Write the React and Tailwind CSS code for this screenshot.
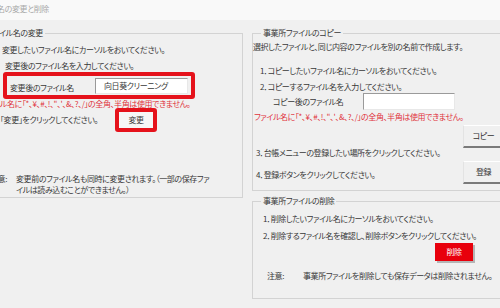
import React from "react";

const jp = "[font-family:'Noto_Sans_CJK_JP','Noto_Sans',sans-serif] [font-feature-settings:'palt'] tracking-[-0.4px]";
const ng = "ファイル名に「*、¥、#、!、\"、'、&、?、/」の全角、半角は使用できません。";

function WinButton({ label }) {
  return (
    <div className="w-[40px] h-[23px] shrink-0 bg-[#f0f0f0] border-t border-t-white border-l border-l-[#e3e3e3] border-b-2 border-b-[#7a7a7a] flex items-center justify-center text-[#333]">
      {label}
    </div>
  );
}

export default function App() {
  return (
    <div className={`w-[500px] h-[308px] overflow-hidden bg-[#f0f0f0] text-[#383838] text-[8px] ${jp}`}>
      {/* title bar */}
      <div className="h-[20px] bg-[#f9f9f9] text-[#a8a8a8] leading-[17px] ml-[-3px]">名の変更と削除</div>

      <div className="flex items-start mt-[7px]">
        {/* left: rename */}
        <fieldset className="w-[250px] ml-[-7px] shrink-0 border border-[#d3d3d3] pb-[2px]">
          <legend className="ml-[3px] px-[2px] leading-[12px]">イル名の変更</legend>
          <div className="ml-[8px] mt-[3px] leading-[16px]">変更したいファイル名にカーソルをおいてください。</div>
          <div className="ml-[11px] leading-[16px]">変更後のファイル名を入力してください。</div>
          <div className="ml-[9px] mt-[-2px] w-[192px] h-[27px] border-4 border-[#e5121b] rounded-[3px] flex items-center">
            <span className="ml-[3px] mt-[4px] w-[85px] shrink-0">変更後のファイル名</span>
            <div className="w-[93px] h-[16px] bg-white border-t border-l border-[#9a9a9a] border-b border-r border-b-[#e8e8e8] border-r-[#e8e8e8] pl-[8px] leading-[14px]">
              向日葵クリーニング
            </div>
          </div>
          <div className="ml-[6px] h-[9px] leading-[10px] text-[#e0323c] whitespace-nowrap">ル名に「*、¥、#、!、"、'、&、?、/」の全角、半角は使用できません。</div>
          <div className="flex items-center h-[24px] ml-[6px]">
            <span className="w-[115px] shrink-0">「変更」をクリックしてください。</span>
            <div className="w-[42px] h-[24px] border-4 border-[#e5121b] rounded-[3px] bg-[#f6f6f6] flex items-center justify-center">変更</div>
          </div>
          <div className="flex mt-[41px] leading-[11px]">
            <span className="ml-[-4px] w-[26px] shrink-0">注意:</span>
            <span className="whitespace-nowrap">
              変更前のファイル名も同時に変更されます。（一部の保存ファ
              <br />
              イルは読み込むことができません。）
            </span>
          </div>
        </fieldset>

        {/* right: copy + delete */}
        <div className="ml-[9px] flex flex-col">
          <fieldset className="w-[270px] border border-[#d3d3d3] pb-[6px]">
            <legend className="ml-[8px] px-[2px] leading-[12px]">事業所ファイルのコピー</legend>
            <div className="mt-[1px] leading-[14px] whitespace-nowrap">選択したファイルと、同じ内容のファイルを別の名前で作成します。</div>
            <div className="ml-[7px] mt-[9px] leading-[16px]">1．コピーしたいファイル名にカーソルをおいてください。</div>
            <div className="ml-[7px] leading-[16px]">2．コピーするファイル名を入力してください。</div>
            <div className="flex items-center h-[17px] mt-[-2px] ml-[20px]">
              <span className="w-[90px] shrink-0">コピー後のファイル名</span>
              <div className="w-[92px] h-[17px] bg-white border-t border-l border-[#9a9a9a] border-b border-r border-b-[#e8e8e8] border-r-[#e8e8e8]" />
            </div>
            <div className="mt-[1px] ml-[1px] leading-[12px] text-[#e0323c] whitespace-nowrap">{ng}</div>
            <div className="mt-[2px] ml-[210px]">
              <WinButton label="コピー" />
            </div>
            <div className="mt-[-3px] ml-[3px] leading-[16px]">3．台帳メニューの登録したい場所をクリックしてください。</div>
            <div className="flex items-start h-[23px] ml-[3px]">
              <span className="w-[207px] shrink-0 mt-[6px] leading-[16px]">4．登録ボタンをクリックしてください。</span>
              <WinButton label="登録" />
            </div>
          </fieldset>

          <fieldset className="w-[270px] mt-[4px] border border-[#d3d3d3] pb-[14px]">
            <legend className="ml-[8px] px-[2px] leading-[12px]">事業所ファイルの削除</legend>
            <div className="ml-[10px] mt-[4px] leading-[16px]">1．削除したいファイル名にカーソルをおいてください。</div>
            <div className="ml-[10px] mt-[1px] leading-[16px]">2．削除するファイル名を確認し、削除ボタンをクリックしてください。</div>
            <div className="ml-[182px] mt-[-1px] w-[38px] h-[18px] bg-[#e8000c] text-white flex items-center justify-center shadow-[2px_2px_0_#b5b5b5]">
              削除
            </div>
            <div className="flex mt-[7px] ml-[14px] leading-[16px]">
              <span className="w-[36px] shrink-0">注意:</span>
              <span className="whitespace-nowrap">事業所ファイルを削除しても保存データは削除されません。</span>
            </div>
          </fieldset>
        </div>
      </div>
    </div>
  );
}
